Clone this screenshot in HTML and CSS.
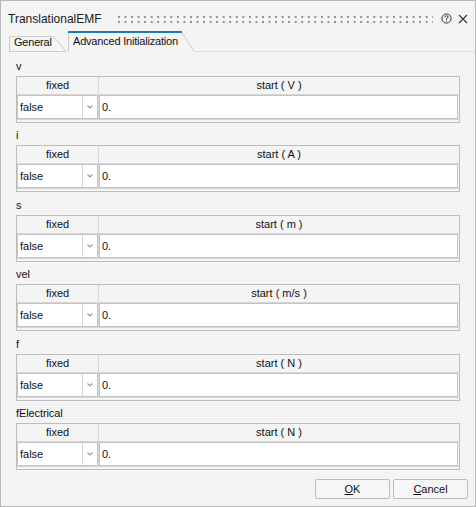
FILE: index.html
```html
<!DOCTYPE html>
<html lang="en">
<head>
  <meta charset="UTF-8">
  <meta name="viewport" content="width=device-width, initial-scale=1.0">
  <title>TranslationalEMF</title>
  <link rel="stylesheet" href="styles.css">
</head>
<body>
  <div class="dialog">
    <div class="titlebar">
      <span class="title">TranslationalEMF</span>
      <span class="grip"></span>
      <svg class="help" width="11" height="11" viewBox="0 0 11 11">
        <circle cx="5.5" cy="5.5" r="4.6" fill="none" stroke="#333" stroke-width="1"/>
        <path d="M3.9 4.3 Q3.9 2.8 5.5 2.8 Q7.1 2.8 7.1 4.1 Q7.1 5 5.5 5.6 V6.6" fill="none" stroke="#333" stroke-width="1"/>
        <rect x="5" y="7.4" width="1" height="1" fill="#333"/>
      </svg>
      <svg class="close" width="10" height="10" viewBox="0 0 10 10">
        <path d="M1 1 L9 9 M9 1 L1 9" stroke="#333" stroke-width="1.1"/>
      </svg>
    </div>

    <div class="tabs">
      <div class="tab">
        <svg class="tab-shape" width="58" height="16" viewBox="0 0 58 16">
          <path d="M0.5 16 V0.5 H44.5 L57 15.5 H0" fill="#f4f4f4" stroke="#cdcdcd" stroke-width="1"/>
        </svg>
        <span class="tab-text">General</span>
      </div>
      <div class="tab active">
        <svg class="tab-shape" width="126" height="21" viewBox="0 0 126 21">
          <path d="M0.5 21 V1 H113.5 L126 20.5" fill="#f4f4f4" stroke="#cdcdcd" stroke-width="1"/>
          <rect x="0" y="0" width="114" height="2" fill="#1f7bb6"/>
        </svg>
        <span class="tab-text">Advanced Initialization</span>
      </div>
      <div class="tab-rest"></div>
    </div>

    <div class="pane">
      <div class="group">
        <div class="group-label">v</div>
        <div class="grid">
          <div class="grid-head">
            <div class="hcell col-fixed">fixed</div>
            <div class="hcell col-start">start ( V )</div>
          </div>
          <div class="grid-row">
            <div class="cell col-fixed">
              <div class="combo">
                <span class="combo-text">false</span>
                <span class="combo-arrow"><svg width="6" height="4" viewBox="0 0 6 4"><path d="M0.5 0.5 L3 3 L5.5 0.5" fill="none" stroke="#9a9a9a" stroke-width="1.2"/></svg></span>
              </div>
            </div>
            <div class="cell col-start"><div class="edit">0.</div></div>
          </div>
        </div>
      </div>

      <div class="group">
        <div class="group-label">i</div>
        <div class="grid">
          <div class="grid-head">
            <div class="hcell col-fixed">fixed</div>
            <div class="hcell col-start">start ( A )</div>
          </div>
          <div class="grid-row">
            <div class="cell col-fixed">
              <div class="combo">
                <span class="combo-text">false</span>
                <span class="combo-arrow"><svg width="6" height="4" viewBox="0 0 6 4"><path d="M0.5 0.5 L3 3 L5.5 0.5" fill="none" stroke="#9a9a9a" stroke-width="1.2"/></svg></span>
              </div>
            </div>
            <div class="cell col-start"><div class="edit">0.</div></div>
          </div>
        </div>
      </div>

      <div class="group">
        <div class="group-label">s</div>
        <div class="grid">
          <div class="grid-head">
            <div class="hcell col-fixed">fixed</div>
            <div class="hcell col-start">start ( m )</div>
          </div>
          <div class="grid-row">
            <div class="cell col-fixed">
              <div class="combo">
                <span class="combo-text">false</span>
                <span class="combo-arrow"><svg width="6" height="4" viewBox="0 0 6 4"><path d="M0.5 0.5 L3 3 L5.5 0.5" fill="none" stroke="#9a9a9a" stroke-width="1.2"/></svg></span>
              </div>
            </div>
            <div class="cell col-start"><div class="edit">0.</div></div>
          </div>
        </div>
      </div>

      <div class="group">
        <div class="group-label">vel</div>
        <div class="grid">
          <div class="grid-head">
            <div class="hcell col-fixed">fixed</div>
            <div class="hcell col-start">start ( m/s )</div>
          </div>
          <div class="grid-row">
            <div class="cell col-fixed">
              <div class="combo">
                <span class="combo-text">false</span>
                <span class="combo-arrow"><svg width="6" height="4" viewBox="0 0 6 4"><path d="M0.5 0.5 L3 3 L5.5 0.5" fill="none" stroke="#9a9a9a" stroke-width="1.2"/></svg></span>
              </div>
            </div>
            <div class="cell col-start"><div class="edit">0.</div></div>
          </div>
        </div>
      </div>

      <div class="group">
        <div class="group-label">f</div>
        <div class="grid">
          <div class="grid-head">
            <div class="hcell col-fixed">fixed</div>
            <div class="hcell col-start">start ( N )</div>
          </div>
          <div class="grid-row">
            <div class="cell col-fixed">
              <div class="combo">
                <span class="combo-text">false</span>
                <span class="combo-arrow"><svg width="6" height="4" viewBox="0 0 6 4"><path d="M0.5 0.5 L3 3 L5.5 0.5" fill="none" stroke="#9a9a9a" stroke-width="1.2"/></svg></span>
              </div>
            </div>
            <div class="cell col-start"><div class="edit">0.</div></div>
          </div>
        </div>
      </div>

      <div class="group">
        <div class="group-label">fElectrical</div>
        <div class="grid">
          <div class="grid-head">
            <div class="hcell col-fixed">fixed</div>
            <div class="hcell col-start">start ( N )</div>
          </div>
          <div class="grid-row">
            <div class="cell col-fixed">
              <div class="combo">
                <span class="combo-text">false</span>
                <span class="combo-arrow"><svg width="6" height="4" viewBox="0 0 6 4"><path d="M0.5 0.5 L3 3 L5.5 0.5" fill="none" stroke="#9a9a9a" stroke-width="1.2"/></svg></span>
              </div>
            </div>
            <div class="cell col-start"><div class="edit">0.</div></div>
          </div>
        </div>
      </div>
    </div>

    <div class="buttons">
      <button class="btn"><u>O</u>K</button>
      <button class="btn"><u>C</u>ancel</button>
    </div>
  </div>
</body>
</html>
```

FILE: styles.css
```css
body {
  margin: 0;
  background-color: #f4f4f4;
}
.dialog {
  width: 476px;
  height: 507px;
  box-sizing: border-box;
  border: 1px solid #b9b9b9;
  background-color: #f4f4f4;
  display: flex;
  flex-direction: column;
  font-family: "Liberation Sans", Arial, sans-serif;
  font-size: 11px;
  line-height: 13px;
  color: #111;
}

/* title bar */
.titlebar {
  height: 30px;
  box-sizing: border-box;
  padding: 5px 0 0 7px;
  display: flex;
  align-items: center;
}
.title {
  font-size: 12px;
  line-height: 14px;
  color: #1a1a1a;
}
.grip {
  width: 315px;
  height: 7px;
  margin-left: 16px;
  margin-top: 1px;
  background-image:
    linear-gradient(90deg, #8e8e8e 2px, transparent 2px),
    linear-gradient(90deg, #8e8e8e 2px, transparent 2px);
  background-size: 6.55px 2px;
  background-position: 0 0, 0 5px;
  background-repeat: repeat-x;
}
.help {
  margin-left: 8px;
}
.close {
  margin-left: 6px;
}

/* tabs */
.tabs {
  height: 21px;
  display: flex;
  align-items: flex-end;
  padding-left: 8px;
}
.tab {
  position: relative;
  width: 58px;
  height: 16px;
  margin-right: 1px;
}
.tab.active {
  width: 126px;
  height: 21px;
  margin-right: 0;
}
.tab-shape {
  position: absolute;
  left: 0;
  top: 0;
}
.tab-text {
  position: relative;
  display: block;
  padding-left: 5px;
  letter-spacing: -0.2px;
  color: #111;
}
.tab.active .tab-text {
  padding-top: 4px;
}
.tab-rest {
  flex: 1;
  height: 21px;
  box-sizing: border-box;
  border-bottom: 1px solid #dcdcdc;
}

/* parameter groups */
.pane {
  flex: 1;
  padding: 8px 15px 0 15px;
}
.group {
  margin-bottom: 6.4px;
}
.group-label {
  height: 13px;
  margin-bottom: 3px;
  letter-spacing: -0.1px;
}
.grid {
  width: 444px;
  height: 47px;
  box-sizing: border-box;
  border: 1px solid #bdbdbd;
}
.grid-head {
  display: flex;
  height: 18px;
  box-sizing: border-box;
  border-bottom: 1px solid #d6d6d6;
}
.hcell {
  line-height: 17px;
  text-align: center;
}
.col-fixed {
  width: 81px;
  flex: none;
  border-right: 1px solid #d6d6d6;
}
.col-start {
  flex: 1;
}
.grid-row {
  display: flex;
  height: 25px;
  box-sizing: border-box;
  border-bottom: 1px solid #d6d6d6;
}
.cell {
  height: 24px;
}
.combo {
  display: flex;
  height: 24px;
  box-sizing: border-box;
  border: 1px solid #c4c4c4;
  background-color: #fff;
}
.combo-text {
  flex: 1;
  line-height: 22px;
  padding-left: 2px;
}
.combo-arrow {
  width: 14px;
  border-left: 1px solid #d4d4d4;
  display: flex;
  align-items: center;
  justify-content: center;
}
.edit {
  height: 24px;
  margin-right: 1px;
  box-sizing: border-box;
  border: 1px solid #c4c4c4;
  background-color: #fff;
  line-height: 22px;
  padding-left: 2px;
}

/* dialog buttons */
.buttons {
  display: flex;
  justify-content: flex-end;
  gap: 3px;
  padding: 0 7px 7px 0;
}
.btn {
  width: 75px;
  height: 20px;
  box-sizing: border-box;
  border: 1px solid #bcbcbc;
  border-radius: 2px;
  background-color: #f6f6f6;
  font-family: "Liberation Sans", Arial, sans-serif;
  font-size: 11px;
  line-height: 18px;
  color: #111;
  padding: 0;
}
```
